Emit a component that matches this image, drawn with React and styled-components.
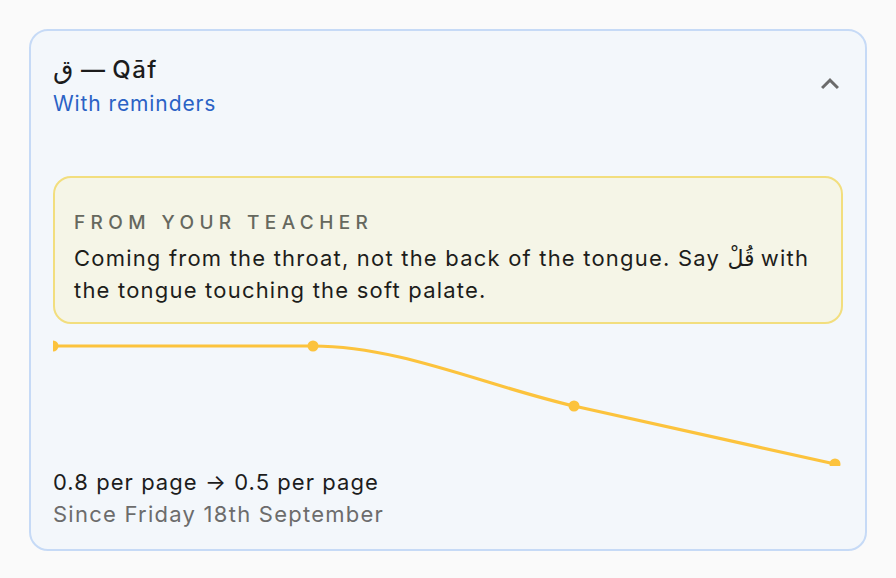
import React from "react";
import styled, { createGlobalStyle } from "styled-components";

const GlobalStyle = createGlobalStyle`
  html, body {
    margin: 0;
    padding: 0;
    background: #fafafa;
    font-family: Inter, "Noto Sans", sans-serif;
  }
`;

const Page = styled.div`
  padding: 29px 29px 28px 29px;
`;

const Card = styled.section`
  width: 838px;
  box-sizing: border-box;
  background: #f3f7fb;
  border: 2px solid #c6daf6;
  border-radius: 19px;
  padding: 19px 22px 19px 22px;
`;

const Header = styled.div`
  display: flex;
  align-items: flex-start;
  justify-content: space-between;
`;

const Titles = styled.div`
  display: flex;
  flex-direction: column;
`;

const Title = styled.h2`
  margin: 0;
  font-size: 24px;
  line-height: 36px;
  font-weight: 500;
  letter-spacing: 1.5px;
  word-spacing: 1px;
  color: #1c1c1c;
`;

const Subtitle = styled.div`
  font-size: 21px;
  line-height: 32px;
  letter-spacing: 0.9px;
  color: #2a62c5;
`;

const Toggle = styled.button`
  border: none;
  background: transparent;
  padding: 0;
  margin: 16px -5px 0 0;
  width: 36px;
  height: 36px;
  display: flex;
  align-items: center;
  justify-content: center;
  cursor: pointer;
`;

const Note = styled.div`
  margin-top: 56px;
  background: #f5f5e7;
  border: 2px solid #f2de7e;
  border-radius: 18px;
  padding: 31px 19px 16px 19px;
`;

const NoteLabel = styled.div`
  font-size: 19px;
  line-height: 28px;
  letter-spacing: 5.4px;
  font-weight: 500;
  color: #66685e;
  text-transform: uppercase;
`;

const NoteText = styled.p`
  margin: 4px 0 0;
  font-size: 22px;
  line-height: 32px;
  letter-spacing: 1.2px;
  color: #1d1d1b;
`;

const Arabic = styled.span`
  font-family: "Noto Sans", "DejaVu Sans", sans-serif;
  font-size: ${(p) => (p.$big ? "1.1em" : "1em")};
  letter-spacing: 0;
`;

const Chart = styled.svg`
  display: block;
  margin-top: 11px;
  width: 789px;
  height: 131px;
`;

const Stats = styled.div`
  display: flex;
  flex-direction: column;
`;

const Rate = styled.div`
  font-size: 22px;
  line-height: 32px;
  letter-spacing: 1.05px;
  color: #1d1d1d;
`;

const Since = styled(Rate)`
  letter-spacing: 1.25px;
  color: #6c6c6c;
`;

const points = [
  [0, 11],
  [260, 11],
  [521, 71],
  [782, 129],
];

function Trend() {
  const path =
    "M0 11 L260 11 C347 11 434 51.3 521 71 C608 90.7 695 109.7 782 129";
  return (
    <Chart viewBox="0 0 789 131">
      <path d={path} fill="none" stroke="#fcc33d" strokeWidth="3.2" />
      {points.map(([x, y]) => (
        <circle key={x} cx={x} cy={y} r="5.5" fill="#fcc33d" />
      ))}
    </Chart>
  );
}

export default function App() {
  return (
    <>
      <GlobalStyle />
      <Page>
        <Card>
          <Header>
            <Titles>
              <Title>
                <Arabic $big>ق</Arabic> — Qāf
              </Title>
              <Subtitle>With reminders</Subtitle>
            </Titles>
            <Toggle aria-label="Collapse">
              <svg width="36" height="36" viewBox="0 0 24 24">
                <path
                  d="M12 8l-6 6 1.41 1.41L12 10.83l4.59 4.58L18 14z"
                  fill="#6b6b6b"
                />
              </svg>
            </Toggle>
          </Header>
          <Note>
            <NoteLabel>From your teacher</NoteLabel>
            <NoteText>
              Coming from the throat, not the back of the tongue. Say{" "}
              <Arabic>قُلْ</Arabic> with the tongue touching the soft palate.
            </NoteText>
          </Note>
          <Trend />
          <Stats>
            <Rate>0.8 per page → 0.5 per page</Rate>
            <Since>Since Friday 18th September</Since>
          </Stats>
        </Card>
      </Page>
    </>
  );
}
